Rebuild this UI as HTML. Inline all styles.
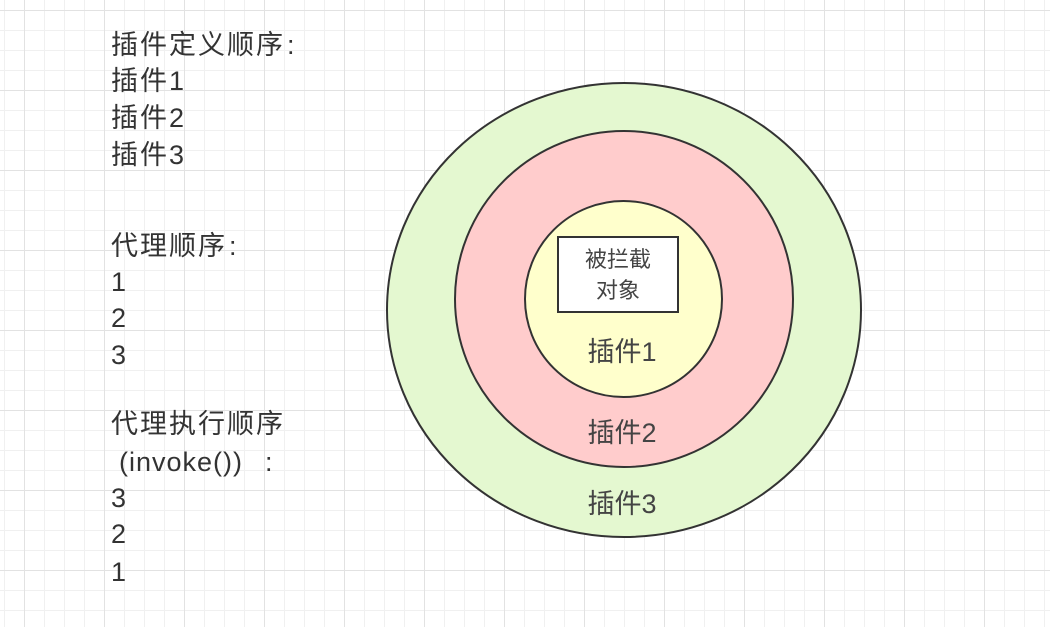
<!DOCTYPE html>
<html><head><meta charset="utf-8"><style>
html,body{margin:0;padding:0}
body{width:1050px;height:627px;overflow:hidden;position:relative;background-color:#fff;
background-image:
linear-gradient(to right,#e2e2e2 1px,transparent 1px),
linear-gradient(to bottom,#e2e2e2 1px,transparent 1px),
linear-gradient(to right,#f0f0f0 1px,transparent 1px),
linear-gradient(to bottom,#f0f0f0 1px,transparent 1px);
background-size:80px 80px,80px 80px,20px 20px,20px 20px;
background-position:24px 10px,24px 10px,4px 10px,4px 10px;
font-family:"Liberation Sans","Noto Sans CJK SC",sans-serif;color:#333}
.t{position:absolute;left:111px;font-size:27px;line-height:27px;white-space:nowrap;letter-spacing:2px}
svg{position:absolute;left:0;top:0}
</style></head><body>
<div class="t" style="top:32px">插件定义顺序<span style="margin-left:2px">:</span></div>
<div class="t" style="top:68px">插件1</div>
<div class="t" style="top:105px">插件2</div>
<div class="t" style="top:142px">插件3</div>
<div class="t" style="top:233px">代理顺序<span style="margin-left:2px">:</span></div>
<div class="t" style="top:269px">1</div>
<div class="t" style="top:305px">2</div>
<div class="t" style="top:342px">3</div>
<div class="t" style="top:411px">代理执行顺序</div>
<div class="t" style="top:449px;letter-spacing:1px"><span style="margin-left:8px">(invoke())</span><span style="margin-left:22px">:</span></div>
<div class="t" style="top:485px">3</div>
<div class="t" style="top:521px">2</div>
<div class="t" style="top:559px">1</div>
<svg width="1050" height="627">
<ellipse cx="624" cy="310" rx="237" ry="227" fill="#e4f8d0" stroke="#333" stroke-width="2"/>
<ellipse cx="624" cy="299" rx="169" ry="168" fill="#ffcccc" stroke="#333" stroke-width="2"/>
<ellipse cx="623.5" cy="299" rx="98.5" ry="98" fill="#ffffcc" stroke="#333" stroke-width="2"/>
<rect x="558" y="237" width="120" height="75" fill="#fff" stroke="#333" stroke-width="2"/>
<g font-family="Liberation Sans, Noto Sans CJK SC, sans-serif" fill="#444" text-anchor="middle">
<text x="618" y="267" font-size="22">被拦截</text>
<text x="618" y="298" font-size="22">对象</text>
<text x="622" y="361" font-size="27">插件1</text>
<text x="622" y="442" font-size="27">插件2</text>
<text x="622" y="513" font-size="27">插件3</text>
</g>
</svg>
</body></html>
